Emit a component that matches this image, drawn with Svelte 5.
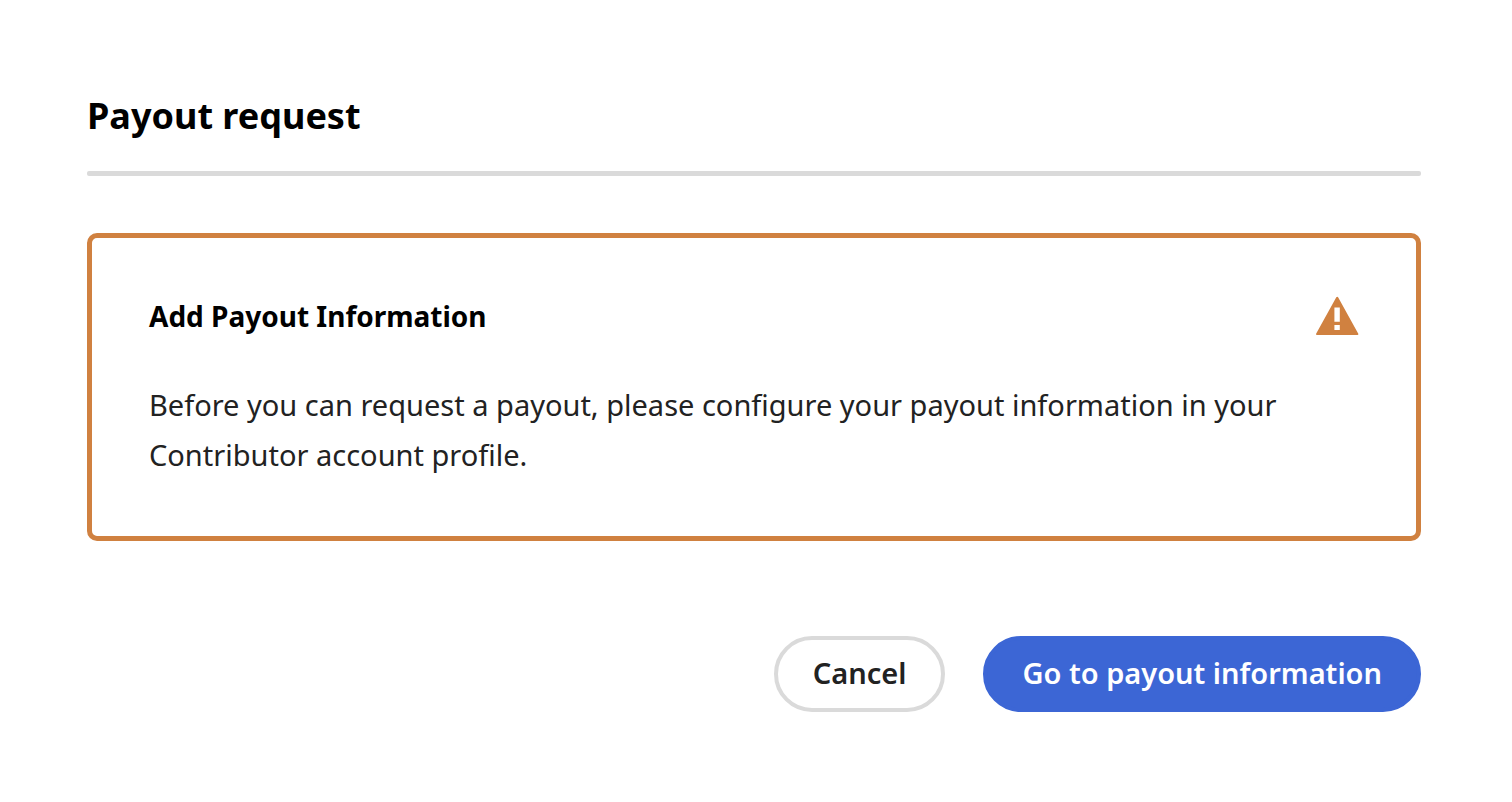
<script lang="ts">
  let {
    oncancel,
    profileUrl = "#payout-information",
  }: {
    oncancel?: () => void;
    profileUrl?: string;
  } = $props();
</script>

<section class="dialog" role="dialog" aria-labelledby="dialog-title">
  <h1 id="dialog-title">Payout request</h1>
  <hr />

  <div class="alert" role="alert">
    <div class="alert-header">
      <h2>Add Payout Information</h2>
      <svg class="alert-icon" viewBox="0 0 44 40" aria-hidden="true">
        <path
          fill="currentColor"
          fill-rule="evenodd"
          d="M21.300 1.300a1 1 0 0 1 1.800 0L43.300 37.700a.8.8 0 0 1-.7 1.200H1.800a.8.8 0 0 1-.7-1.200ZM19.400 11.600v14.200h5.400v-14.200ZM19.400 29v5h5.400v-5Z"
        />
      </svg>
    </div>
    <p>
      Before you can request a payout, please configure your payout information
      in your Contributor account profile.
    </p>
  </div>

  <footer class="actions">
    <button type="button" class="button secondary" onclick={() => oncancel?.()}>
      Cancel
    </button>
    <a class="button primary" href={profileUrl}>Go to payout information</a>
  </footer>
</section>

<style>
  :global(body) {
    background: #fff;
  }

  .dialog {
    padding: 88px 91px 88px 87px;
    font-family: "Noto Sans", "Open Sans", sans-serif;
    color: #222;
  }

  h1 {
    margin: 0;
    font-size: 36px;
    line-height: 56px;
    color: #000;
  }

  hr {
    height: 5px;
    margin: 27px 0 57px;
    border: 0;
    border-radius: 2px;
    background: #dadada;
  }

  .alert {
    padding: 53px 57px 56px;
    border: 5px solid #d08140;
    border-radius: 10px;
  }

  .alert-header {
    display: flex;
    align-items: center;
    justify-content: space-between;
    gap: 32px;
  }

  h2 {
    margin: 0;
    font-size: 28px;
    line-height: 50px;
    color: #000;
  }

  .alert-icon {
    flex: none;
    width: 44px;
    height: 40px;
    color: #d08140;
  }

  p {
    margin: 39px 0 0;
    font-size: 29px;
    line-height: 50px;
  }

  .actions {
    display: flex;
    justify-content: flex-end;
    gap: 38px;
    margin-top: 95px;
  }

  .button {
    display: flex;
    align-items: center;
    box-sizing: border-box;
    height: 76px;
    padding: 0 35px 2px;
    border: 4px solid transparent;
    border-radius: 38px;
    font: 600 29px/40px "Noto Sans", "Open Sans", sans-serif;
    text-decoration: none;
    cursor: pointer;
  }

  .secondary {
    border-color: #dadada;
    background: #fff;
    color: #222;
  }

  .primary {
    border-color: #3c66d5;
    background: #3c66d5;
    color: #fff;
  }
</style>
